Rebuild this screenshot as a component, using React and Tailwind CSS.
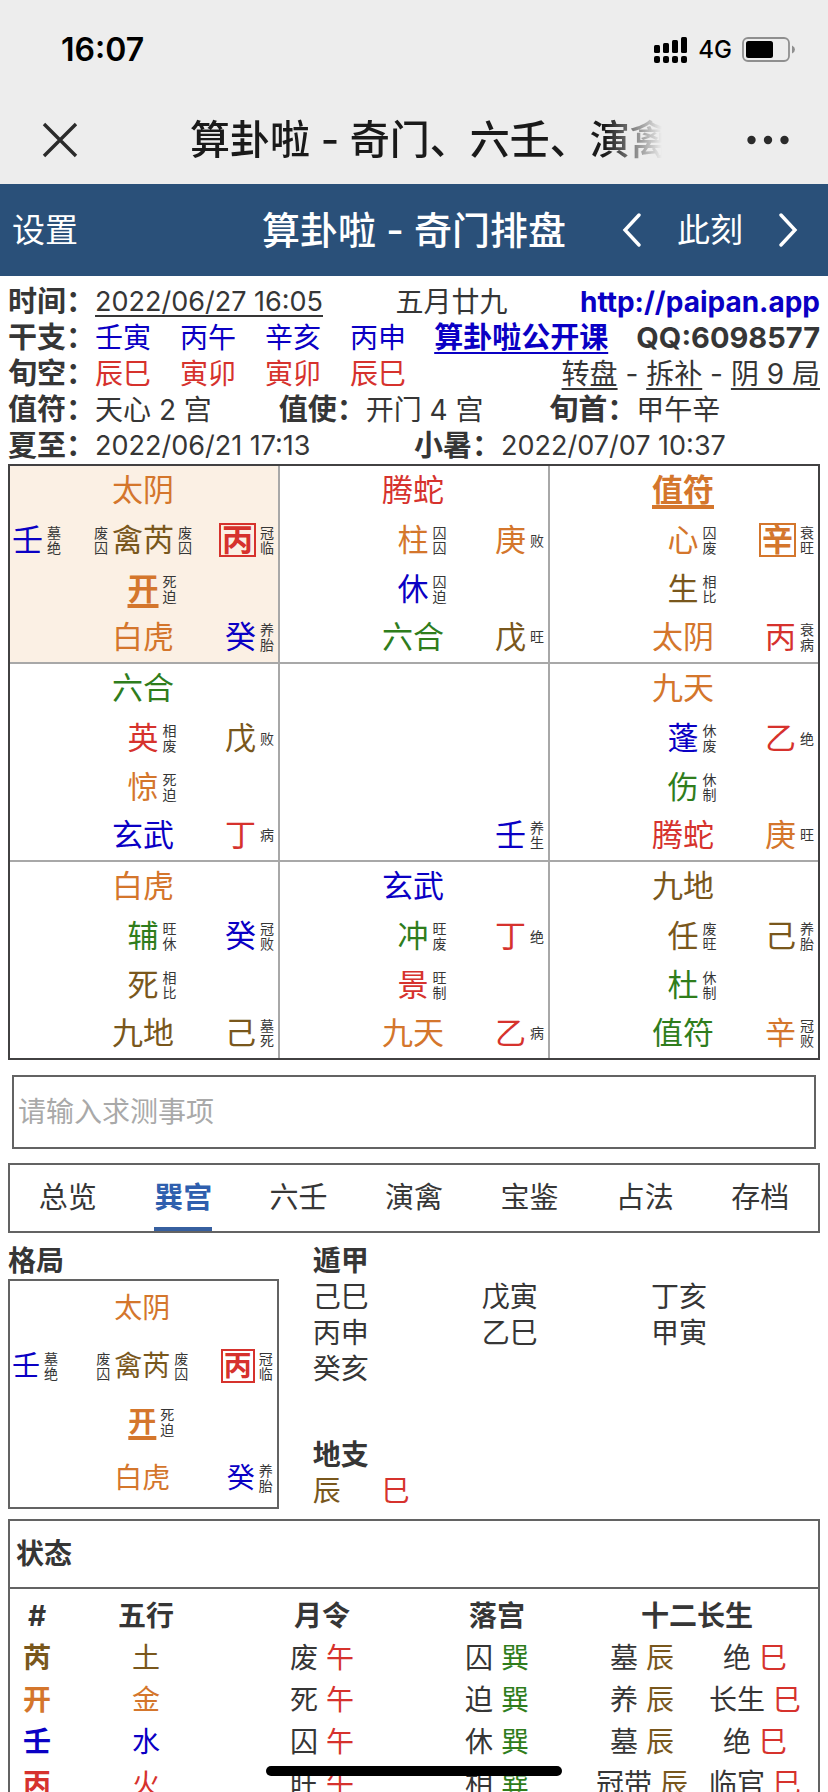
import React from "react";

const TONES = {
  wood: "text-[#2f7d1c]",
  fire: "text-[#d6322d]",
  earth: "text-[#79571c]",
  metal: "text-[#d4762c]",
  water: "text-[#0a00c4]",
};

const PALACES = [
  {
    active: true,
    god: ["太阴", "metal"],
    guest: ["壬", "water", "墓绝"],
    starBefore: "废囚",
    star: ["禽芮", "earth", "废囚"],
    sky: ["丙", "fire", "冠临", "boxed"],
    door: ["开", "metal", "死迫", "marked"],
    hidden: ["白虎", "metal"],
    ground: ["癸", "water", "养胎"],
  },
  {
    god: ["腾蛇", "fire"],
    star: ["柱", "metal", "囚囚"],
    sky: ["庚", "metal", "败"],
    door: ["休", "water", "囚迫"],
    hidden: ["六合", "wood"],
    ground: ["戊", "earth", "旺"],
  },
  {
    god: ["值符", "metal", "", "marked"],
    star: ["心", "metal", "囚废"],
    sky: ["辛", "metal", "衰旺", "boxed"],
    door: ["生", "earth", "相比"],
    hidden: ["太阴", "metal"],
    ground: ["丙", "fire", "衰病"],
  },
  {
    god: ["六合", "wood"],
    star: ["英", "fire", "相废"],
    sky: ["戊", "earth", "败"],
    door: ["惊", "metal", "死迫"],
    hidden: ["玄武", "water"],
    ground: ["丁", "fire", "病"],
  },
  { ground: ["壬", "water", "养生"] },
  {
    god: ["九天", "metal"],
    star: ["蓬", "water", "休废"],
    sky: ["乙", "fire", "绝"],
    door: ["伤", "wood", "休制"],
    hidden: ["腾蛇", "fire"],
    ground: ["庚", "metal", "旺"],
  },
  {
    god: ["白虎", "metal"],
    star: ["辅", "wood", "旺休"],
    sky: ["癸", "water", "冠败"],
    door: ["死", "earth", "相比"],
    hidden: ["九地", "earth"],
    ground: ["己", "earth", "墓死"],
  },
  {
    god: ["玄武", "water"],
    star: ["冲", "wood", "旺废"],
    sky: ["丁", "fire", "绝"],
    door: ["景", "fire", "旺制"],
    hidden: ["九天", "metal"],
    ground: ["乙", "fire", "病"],
  },
  {
    god: ["九地", "earth"],
    star: ["任", "earth", "废旺"],
    sky: ["己", "earth", "养胎"],
    door: ["杜", "wood", "休制"],
    hidden: ["值符", "wood"],
    ground: ["辛", "metal", "冠败"],
  },
];

const TABS = ["总览", "巽宫", "六壬", "演禽", "宝鉴", "占法", "存档"];

const STATES = [
  ["芮", "土", "earth", "废", "囚", "墓", "绝"],
  ["开", "金", "metal", "死", "迫", "养", "长生"],
  ["壬", "水", "water", "囚", "休", "墓", "绝"],
  ["丙", "火", "fire", "旺", "相", "冠带", "临官"],
];

function Note({ text }) {
  if (!text) return null;
  return (
    <span className="w-[14px] shrink-0 text-[14px] leading-[15px] break-all text-[#363636]">
      {text}
    </span>
  );
}

function Glyph({ item }) {
  if (!item) return null;
  const [text, tone, , mark] = item;
  const extra =
    mark === "boxed"
      ? "flex items-center justify-center border-2 border-current px-px leading-[30px] font-bold"
      : mark === "marked"
        ? "font-bold underline decoration-4 underline-offset-4 [text-decoration-skip-ink:none]"
        : "";
  return <span className={`shrink-0 ${TONES[tone]} ${extra}`}>{text}</span>;
}

function Line({ left, before, center, right }) {
  return (
    <div className="grid grid-cols-[1fr_auto_1fr] items-center gap-1">
      <div className="flex items-center gap-1">
        <Glyph item={left} />
        <Note text={left && left[2]} />
        <span className="grow" />
        <Note text={before} />
      </div>
      <div>
        <Glyph item={center} />
      </div>
      <div className="flex items-center gap-1">
        <Note text={center && center[2]} />
        <span className="grow" />
        <Glyph item={right} />
        <Note text={right && right[2]} />
      </div>
    </div>
  );
}

function Palace({ data, className }) {
  return (
    <div className={`grid pr-1 pl-[2px] ${className}`}>
      <Line center={data.god} />
      <Line left={data.guest} before={data.starBefore} center={data.star} right={data.sky} />
      <Line center={data.door} />
      <Line center={data.hidden} right={data.ground} />
    </div>
  );
}

function StatusBar() {
  return (
    <div className="flex h-24 items-center justify-between pt-1 pr-8 pl-[61px] text-black">
      <span className="text-[32px] leading-10 font-semibold">16:07</span>
      <div className="flex items-center gap-[10px]">
        <svg width="34" height="28" viewBox="0 0 34 28" aria-hidden="true">
          <rect x="0" y="9" width="6" height="8" rx="1.5" />
          <rect x="9" y="7" width="6" height="10" rx="1.5" />
          <rect x="18" y="4" width="6" height="13" rx="1.5" />
          <rect x="27" y="1" width="6" height="16" rx="1.5" />
          <rect x="0" y="20" width="6" height="7" rx="2" />
          <rect x="9" y="20" width="6" height="7" rx="2" />
          <rect x="18" y="20" width="6" height="7" rx="2" />
          <rect x="27" y="20" width="6" height="7" rx="2" />
        </svg>
        <span className="text-[24px] leading-8 font-medium">4G</span>
        <svg width="54" height="26" viewBox="0 0 54 26" aria-hidden="true">
          <rect x="1" y="1" width="46" height="23" rx="5" fill="none" stroke="#8f8f8f" strokeWidth="1.8" />
          <rect x="4" y="4" width="27" height="17" rx="2.5" />
          <path d="M50 8.500 Q53 10 53 12.500 Q53 15 50 16.500 Z" fill="#8f8f8f" />
        </svg>
      </div>
    </div>
  );
}

function TitleBar() {
  return (
    <div className="flex h-[88px] items-center pr-[38px] pl-[42px] text-[#1a1a1a]">
      <button type="button" aria-label="关闭" className="shrink-0">
        <svg width="36" height="36" viewBox="0 0 36 36" fill="none" stroke="#2b2b2b" strokeWidth="3.4" aria-hidden="true">
          <path d="M2 2 L34 34 M34 2 L2 34" />
        </svg>
      </button>
      <div className="mr-[84px] ml-28 min-w-0 grow overflow-hidden text-[40px] leading-[56px] font-medium whitespace-nowrap [mask-image:linear-gradient(to_right,black_88%,transparent_100%)]">
        算卦啦 - 奇门、六壬、演禽
      </div>
      <button type="button" aria-label="更多" className="shrink-0">
        <svg width="44" height="12" viewBox="0 0 44 12" fill="#2b2b2b" aria-hidden="true">
          <circle cx="5.500" cy="6" r="4.200" />
          <circle cx="22" cy="6" r="4.200" />
          <circle cx="38.500" cy="6" r="4.200" />
        </svg>
      </button>
    </div>
  );
}

function Chevron({ label, d }) {
  return (
    <button type="button" aria-label={label}>
      <svg width="20" height="34" viewBox="0 0 20 34" fill="none" stroke="white" strokeWidth="3.400" strokeLinecap="round" aria-hidden="true">
        <path d={d} />
      </svg>
    </button>
  );
}

function NavBar() {
  return (
    <nav className="grid h-[92px] shrink-0 grid-cols-[1fr_auto_1fr] items-center bg-[#2a5079] px-3 text-white">
      <button type="button" className="justify-self-start text-[33px] leading-[48px]">
        设置
      </button>
      <h1 className="text-[38px] leading-[54px] font-medium">算卦啦 - 奇门排盘</h1>
      <div className="flex items-center justify-end gap-[35px] pr-[18px]">
        <Chevron label="上一局" d="M17 2 L3 17 L17 32" />
        <button type="button" className="text-[33px] leading-[48px]">
          此刻
        </button>
        <Chevron label="下一局" d="M3 2 L17 17 L3 32" />
      </div>
    </nav>
  );
}

function Pillars({ items, className }) {
  return (
    <div className={`flex gap-[29px] ${className}`}>
      {items.map((item, i) => (
        <span key={i}>{item}</span>
      ))}
    </div>
  );
}

function Field({ label, children }) {
  return (
    <div className="flex">
      <b className="text-[29px]">{label}：</b>
      {children}
    </div>
  );
}

function Info() {
  const option = "underline decoration-2 underline-offset-4";
  return (
    <section className="mt-2 px-2 leading-9 whitespace-nowrap">
      <div className="flex justify-between">
        <Field label="时间">
          <button type="button" className={`text-[27px] ${option}`}>
            2022/06/27 16:05
          </button>
        </Field>
        <span>五月廿九</span>
        <a href="http://paipan.app" className="font-bold text-[#0a00c4]">
          http://paipan.app
        </a>
      </div>
      <div className="flex justify-between">
        <Field label="干支">
          <Pillars items={["壬寅", "丙午", "辛亥", "丙申"]} className="text-[#0a00c4]" />
        </Field>
        <a
          href="#course"
          className="text-[29px] font-bold text-[#0a00c4] underline decoration-2 underline-offset-4 [text-decoration-skip-ink:none]"
        >
          算卦啦公开课
        </a>
        <b className="text-[29px]">QQ:6098577</b>
      </div>
      <div className="flex justify-between">
        <Field label="旬空">
          <Pillars items={["辰巳", "寅卯", "寅卯", "辰巳"]} className="text-[#d6322d]" />
        </Field>
        <div>
          <button type="button" className={option}>转盘</button> -{" "}
          <button type="button" className={option}>拆补</button> -{" "}
          <button type="button" className={option}>阴 9 局</button>
        </div>
      </div>
      <div className="grid grid-cols-3">
        <Field label="值符">天心 2 宫</Field>
        <Field label="值使">开门 4 宫</Field>
        <Field label="旬首">甲午辛</Field>
      </div>
      <div className="grid grid-cols-2">
        <Field label="夏至">
          <span className="text-[27px]">2022/06/21 17:13</span>
        </Field>
        <Field label="小暑">
          <span className="text-[27px]">2022/07/07 10:37</span>
        </Field>
      </div>
    </section>
  );
}

function Board() {
  return (
    <section className="mx-2 grid grid-cols-3 gap-[2px] border-2 border-[#424142] bg-[#a8a8a8] text-[31px] leading-9">
      {PALACES.map((data, i) => (
        <Palace
          key={i}
          data={data}
          className={`grid-rows-[47px_54px_44px_51px] ${data.active ? "bg-[#fbf0e4]" : "bg-white"}`}
        />
      ))}
    </section>
  );
}

function Tabs() {
  return (
    <div role="tablist" className="mx-2 mt-[14px] flex h-[70px] border-2 border-[#636363] text-[29px]">
      {TABS.map((name) => {
        const selected = name === "巽宫";
        return (
          <button
            key={name}
            type="button"
            role="tab"
            aria-selected={selected}
            className="flex flex-1 justify-center"
          >
            <span
              className={`h-full border-b-4 leading-[66px] ${
                selected ? "border-[#365f9f] font-bold text-[#2f5fae]" : "border-transparent"
              }`}
            >
              {name}
            </span>
          </button>
        );
      })}
    </div>
  );
}

function Detail() {
  return (
    <section className="mx-2 mt-[10px] flex gap-[34px] leading-9">
      <div className="w-1/3">
        <h2 className="font-bold">格局</h2>
        <div className="border-2 border-[#636363]">
          <Palace data={PALACES[0]} className="grid-rows-[54px_61px_52px_59px]" />
        </div>
      </div>
      <div className="grow">
        <h2 className="font-bold">遁甲</h2>
        <div className="grid grid-cols-3">
          {["己巳", "戊寅", "丁亥", "丙申", "乙巳", "甲寅", "癸亥"].map((name) => (
            <span key={name}>{name}</span>
          ))}
        </div>
        <h2 className="mt-[50px] font-bold">地支</h2>
        <div className="flex gap-[41px]">
          <span className={TONES.earth}>辰</span>
          <span className={TONES.fire}>巳</span>
        </div>
      </div>
    </section>
  );
}

function States() {
  return (
    <section className="mx-2 mt-[10px] border-2 border-[#636363]">
      <h2 className="border-b-2 border-[#636363] px-[6px] leading-[66px] font-bold">状态</h2>
      <div className="pt-[6px] pr-2 pl-[6px]">
        <table className="w-full table-fixed text-center leading-[42px] whitespace-nowrap">
          <colgroup>
            <col className="w-[42px]" />
            <col className="w-[176px]" />
            <col className="w-[176px]" />
            <col className="w-[174px]" />
            <col className="w-[116px]" />
            <col className="w-[110px]" />
          </colgroup>
          <thead>
            <tr>
              <th>#</th>
              <th>五行</th>
              <th>月令</th>
              <th>落宫</th>
              <th colSpan={2}>十二长生</th>
            </tr>
          </thead>
          <tbody>
            {STATES.map(([name, element, tone, month, palace, chen, si]) => (
              <tr key={name}>
                <th className={TONES[tone]}>{name}</th>
                <td className={TONES[tone]}>{element}</td>
                <td>
                  {month} <span className={TONES.fire}>午</span>
                </td>
                <td>
                  {palace} <span className={TONES.wood}>巽</span>
                </td>
                <td>
                  {chen} <span className={TONES.earth}>辰</span>
                </td>
                <td>
                  {si} <span className={TONES.fire}>巳</span>
                </td>
              </tr>
            ))}
          </tbody>
        </table>
      </div>
    </section>
  );
}

export default function App() {
  return (
    <div
      lang="zh-CN"
      className="relative flex h-screen flex-col overflow-hidden bg-white font-[Inter,'Noto_Sans_CJK_SC',sans-serif] text-[#363636]"
    >
      <header className="shrink-0 bg-[#ededed]">
        <StatusBar />
        <TitleBar />
      </header>
      <NavBar />
      <main className="min-h-0 grow overflow-y-auto text-[28px] [scrollbar-width:none]">
        <Info />
        <Board />
        <div className="mx-3 mt-[15px]">
          <input
            type="text"
            aria-label="求测事项"
            placeholder="请输入求测事项"
            className="block h-[74px] w-full border-2 border-[#636363] px-1 outline-none placeholder:text-[#a9a9a9]"
          />
        </div>
        <Tabs />
        <Detail />
        <States />
      </main>
      <div className="pointer-events-none absolute inset-x-0 bottom-4 flex justify-center">
        <div className="h-[10px] w-[296px] rounded-full bg-black" />
      </div>
    </div>
  );
}
